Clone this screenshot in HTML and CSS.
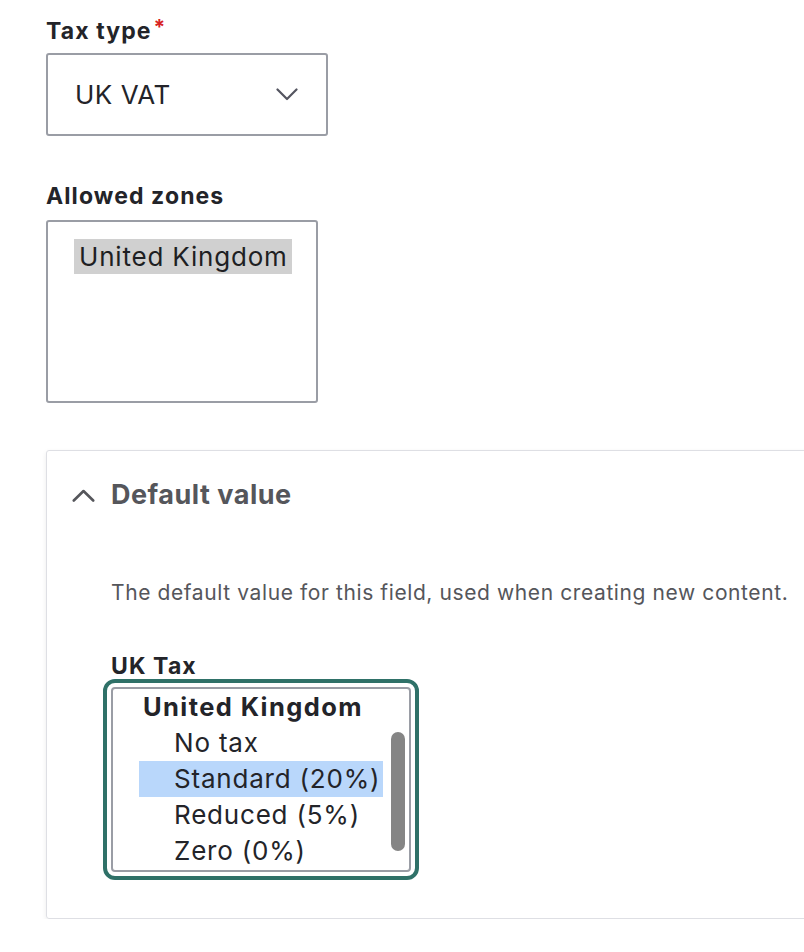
FILE: index.html
```html
<!DOCTYPE html>
<html lang="en">
<head>
<meta charset="utf-8">
<title>Tax field settings</title>
<link rel="stylesheet" href="styles.css">
</head>
<body>
<div class="page">
  <div class="field">
    <label class="label">Tax type<span class="req">*</span></label>
    <div class="select">
      <span class="select-value">UK VAT</span>
      <svg class="select-chev" width="22" height="13" viewBox="0 0 22 13"><path d="M1.5 1.5 L11 11 L20.5 1.5" fill="none" stroke="#545560" stroke-width="2.2" stroke-linecap="round" stroke-linejoin="round"/></svg>
    </div>
  </div>

  <div class="field field-zones">
    <label class="label">Allowed zones</label>
    <div class="listbox">
      <span class="zone-opt">United Kingdom</span>
    </div>
  </div>

  <div class="details">
    <div class="summary">
      <svg class="summary-chev" width="23" height="13" viewBox="0 0 23 13"><path d="M1.8 11.5 L11.5 2 L21.2 11.5" fill="none" stroke="#55565b" stroke-width="2.6" stroke-linecap="round" stroke-linejoin="round"/></svg>
      <span class="summary-text">Default value</span>
    </div>
    <div class="details-body">
      <p class="desc">The default value for this field, used when creating new content.</p>
      <label class="label label-tax">UK Tax</label>
      <div class="taxbox">
        <div class="taxlist">
          <div class="optgroup">United Kingdom</div>
          <div class="opt">No tax</div>
          <div class="opt opt-selected">Standard (20%)</div>
          <div class="opt">Reduced (5%)</div>
          <div class="opt">Zero (0%)</div>
        </div>
        <div class="thumb"></div>
      </div>
    </div>
  </div>
</div>
</body>
</html>
```

FILE: styles.css
```css
html, body {
  margin: 0;
  padding: 0;
  background: #ffffff;
}

body {
  font-family: Inter, "Noto Sans", "Liberation Sans", sans-serif;
  color: #232429;
  overflow: hidden;
}

.page {
  padding: 17px 0 0 46px;
  display: flex;
  flex-direction: column;
}

.field {
  display: flex;
  flex-direction: column;
  align-items: flex-start;
}

.label {
  display: block;
  font-size: 23px;
  line-height: 28px;
  font-weight: 700;
  letter-spacing: 1.1px;
  color: #232429;
}

.req {
  color: #d72222;
  font-size: 21px;
  margin-left: 2px;
  vertical-align: top;
  line-height: 22px;
  letter-spacing: 0;
}

.select {
  margin-top: 8px;
  box-sizing: border-box;
  width: 282px;
  height: 83px;
  border: 2px solid #9a9da5;
  border-radius: 3px;
  padding: 0 28px 0 27px;
  display: flex;
  align-items: center;
  justify-content: space-between;
}

.select-value {
  font-size: 26px;
  line-height: 34px;
  letter-spacing: 0.5px;
  color: #232429;
}

.select-chev {
  display: block;
}

.field-zones {
  margin-top: 46px;
}

.listbox {
  margin-top: 10px;
  box-sizing: border-box;
  width: 272px;
  height: 183px;
  border: 2px solid #9a9da5;
  border-radius: 3px;
  padding: 17px 0 0 26px;
}

.zone-opt {
  display: inline-block;
  background: #d0d0d0;
  font-size: 26px;
  line-height: 35px;
  letter-spacing: 0.8px;
  padding: 0 4px 0 5px;
  color: #1e1f23;
}

.details {
  margin-top: 47px;
  width: 820px;
  box-sizing: border-box;
  border: 1px solid #dedfe4;
  border-radius: 3px;
  box-shadow: 0 2px 5px rgba(0, 0, 0, 0.08);
  padding: 0 0 46px 0;
}

.summary {
  display: flex;
  align-items: center;
  gap: 16px;
  padding: 26px 0 0 25px;
}

.summary-chev {
  display: block;
}

.summary-text {
  font-size: 27px;
  line-height: 36px;
  font-weight: 700;
  letter-spacing: 0.5px;
  color: #55565b;
}

.details-body {
  padding: 0 0 0 64px;
}

.desc {
  margin: 66px 0 0 0;
  font-size: 21px;
  line-height: 28px;
  letter-spacing: 0.6px;
  color: #55565b;
}

.label-tax {
  margin-top: 45px;
}

.taxbox {
  margin-top: 7px;
  position: relative;
  box-sizing: border-box;
  width: 300px;
  height: 185px;
  border: 2px solid #9a9da5;
  border-radius: 4px;
  outline: 4px solid #2f7168;
  outline-offset: 4px;
  padding: 0 0 0 26px;
}

.taxlist {
  width: 244px;
}

.optgroup {
  font-size: 25.5px;
  line-height: 36px;
  font-weight: 700;
  letter-spacing: 1.4px;
  padding-left: 4px;
  color: #232429;
}

.opt {
  font-size: 26px;
  line-height: 36px;
  letter-spacing: 0.8px;
  padding-left: 35px;
  color: #232429;
}

.opt-selected {
  background: #b9d7fb;
}

.thumb {
  position: absolute;
  right: 4px;
  top: 43px;
  width: 14px;
  height: 119px;
  border-radius: 7px;
  background: #858585;
}
```
